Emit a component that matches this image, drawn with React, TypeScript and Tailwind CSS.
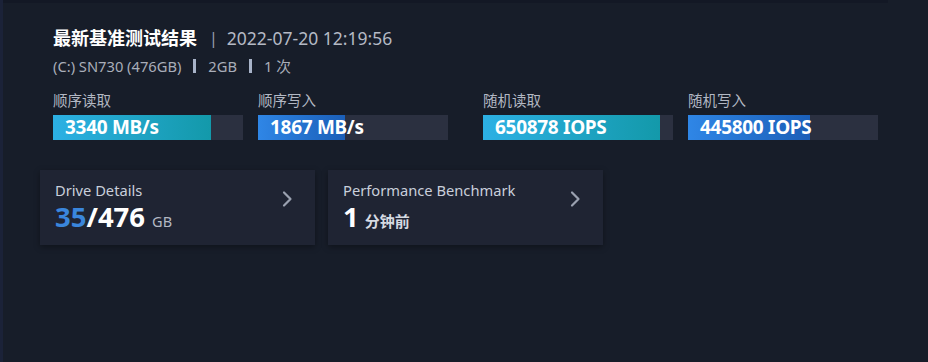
import React from "react";

type Metric = {
  label: string;
  value: string;
  pct: number;
  kind: "read" | "write";
};

const metrics: Metric[] = [
  { label: "顺序读取", value: "3340 MB/s", pct: 83, kind: "read" },
  { label: "顺序写入", value: "1867 MB/s", pct: 46, kind: "write" },
  { label: "随机读取", value: "650878 IOPS", pct: 93, kind: "read" },
  { label: "随机写入", value: "445800 IOPS", pct: 64, kind: "write" },
];

const font = { fontFamily: '"Noto Sans", "Noto Sans CJK SC", sans-serif' };

const Chevron = () => (
  <svg width="12" height="18" viewBox="0 0 12 18" fill="none" className="text-[#9aa1b0]">
    <path d="M3 2.5l6.5 6.5-6.5 6.5" stroke="currentColor" strokeWidth="2.2" strokeLinecap="round" strokeLinejoin="round" />
  </svg>
);

const Bar = ({ m }: { m: Metric }) => (
  <div className="flex flex-col w-[190px]">
    <span className="text-[14.5px] leading-[20px] text-[#b3b8c3]">{m.label}</span>
    <div className="relative mt-[5px] h-[25px] bg-[#2b3040] overflow-hidden">
      <div
        className={
          m.kind === "read"
            ? "h-full bg-gradient-to-r from-[#2cb0e4] to-[#1399aa]"
            : "h-full bg-gradient-to-r from-[#2f86e6] to-[#1b5fb8]"
        }
        style={{ width: `${m.pct}%` }}
      />
      <span className="absolute inset-y-0 left-[12px] flex items-center text-[19px] font-bold text-white tracking-[-0.3px]">
        {m.value}
      </span>
    </div>
  </div>
);

const Card = ({ title, children }: { title: string; children: React.ReactNode }) => (
  <div className="w-[275px] h-[75px] bg-[#1f2433] shadow-[0_2px_6px_rgba(0,0,0,0.35)] px-[15px] pt-[9px] flex justify-between">
    <div className="flex flex-col">
      <span className="text-[14.7px] leading-[22px] text-[#c9cfdb]">{title}</span>
      <div className="flex items-baseline -mt-[1px]">{children}</div>
    </div>
    <div className="pt-[11px] pr-[7px]">
      <Chevron />
    </div>
  </div>
);

export default function App() {
  return (
    <div className="w-[928px] h-[362px] bg-[#171d29] flex" style={font}>
      <div className="w-[3px] h-full bg-[#1b2238]" />
      <div className="flex-1 flex flex-col">
        <div className="w-[885px] h-[3px] bg-[#131825]" />
        <div className="pl-[37px] pt-[23px] flex flex-col">
          <div className="pl-[13px] flex items-center h-[24px]">
            <span className="text-[18px] font-bold text-white">最新基准测试结果</span>
            <span className="ml-[12px] mr-[9px] text-[16px] text-[#9aa0ad]">|</span>
            <span className="text-[17.5px] text-[#b4b9c4]">2022-07-20 12:19:56</span>
          </div>
          <div className="pl-[13px] mt-[6px] flex items-center h-[20px] text-[14.7px] text-[#a9aeb9]">
            <span>(C:) SN730 (476GB)</span>
            <span className="mx-[12px] w-[3px] h-[14px] bg-[#a8b3c8]" />
            <span>2GB</span>
            <span className="mx-[12px] w-[3px] h-[14px] bg-[#a8b3c8]" />
            <span>1 次</span>
          </div>
          <div className="pl-[13px] mt-[14px] flex">
            <Bar m={metrics[0]} />
            <div className="w-[15px]" />
            <Bar m={metrics[1]} />
            <div className="w-[35px]" />
            <Bar m={metrics[2]} />
            <div className="w-[15px]" />
            <Bar m={metrics[3]} />
          </div>
          <div className="mt-[30px] flex gap-[13px]">
            <Card title="Drive Details">
              <span className="text-[27.5px] font-bold leading-[34px] text-[#3a86dc]">35</span>
              <span className="text-[27.5px] font-bold leading-[34px] text-white">/476</span>
              <span className="ml-[7px] text-[14.5px] text-[#b3b8c3]">GB</span>
            </Card>
            <Card title="Performance Benchmark">
              <span className="text-[27.5px] font-bold leading-[34px] text-white">1</span>
              <span className="ml-[6px] text-[15px] font-semibold text-[#d6dae2]">分钟前</span>
            </Card>
          </div>
        </div>
      </div>
    </div>
  );
}
